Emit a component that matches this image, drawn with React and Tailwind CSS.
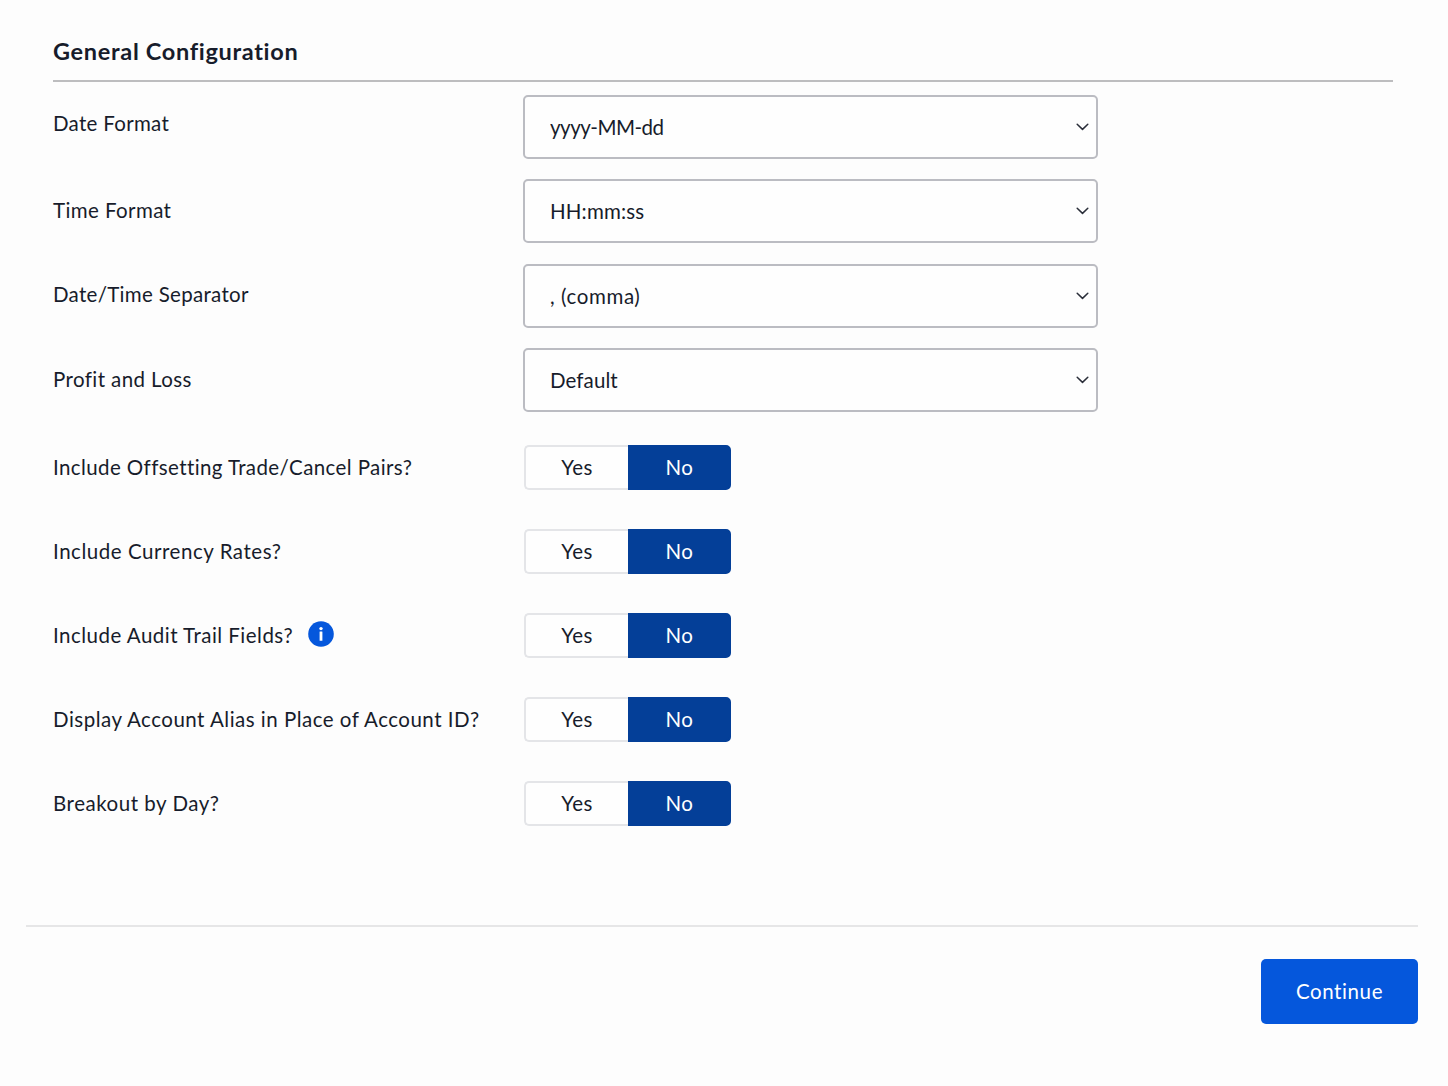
import React, { useState } from 'react';

const selectFields = [
    {
        label: 'Date Format',
        options: ['yyyy-MM-dd', 'MM/dd/yyyy', 'dd/MM/yyyy'],
        labelClass: 'pb-[7px] tracking-[0.3px]',
        selectClass: 'tracking-[-0.5px]',
    },
    {
        label: 'Time Format',
        options: ['HH:mm:ss', 'HHmmss'],
        labelClass: 'pb-[2px] tracking-[0.4px]',
        selectClass: 'tracking-[0.15px]',
    },
    {
        label: 'Date/Time Separator',
        options: [', (comma)', '; (semi-colon)', 'No Separator'],
        labelClass: 'pb-[3px] tracking-[0.3px]',
        selectClass: 'tracking-[0.6px]',
    },
    {
        label: 'Profit and Loss',
        options: ['Default', 'MTM Only', 'Realized Only'],
        labelClass: 'pb-[2px] tracking-[0.4px]',
        selectClass: 'tracking-[0.1px]',
    },
];

const toggleFields = [
    { label: 'Include Offsetting Trade/Cancel Pairs?', labelClass: 'tracking-[0.4px]' },
    { label: 'Include Currency Rates?', labelClass: 'tracking-[0.54px]' },
    { label: 'Include Audit Trail Fields?', labelClass: 'tracking-[0.48px]', info: true },
    { label: 'Display Account Alias in Place of Account ID?', labelClass: 'tracking-[0.49px]' },
    { label: 'Breakout by Day?', labelClass: 'tracking-[0.53px]' },
];

const ChevronIcon = () => (
    <svg className="pointer-events-none absolute right-[9.5px] top-[28px] h-2 w-[13px]" viewBox="0 0 13 8" fill="none">
        <path d="M1.2 1.3 6.5 6.4l5.3-5.1" stroke="#2a2e39" strokeWidth="1.5" strokeLinecap="round" strokeLinejoin="round" />
    </svg>
);

const InfoIcon = () => (
    <svg className="-mt-px ml-[15px] h-[26px] w-[26px]" viewBox="0 0 26 26">
        <circle cx="13" cy="13" r="12.8" fill="#0557dc" />
        <circle cx="13" cy="7.6" r="1.7" fill="#fff" />
        <rect x="11.6" y="10.4" width="2.8" height="9.4" rx="0.4" fill="#fff" />
    </svg>
);

const SelectRow = ({ label, options, labelClass, selectClass }) => (
    <div className="flex h-[84.5px] items-start">
        <div className={`flex h-16 w-[470px] items-center ${labelClass}`}>{label}</div>
        <div className="relative">
            <select
                aria-label={label}
                className={`h-16 w-[575px] appearance-none rounded-[5px] border-2 border-[#bbbcc2] bg-[#fefefe] pl-[25px] outline-none ${selectClass}`}
            >
                {options.map((option) => (
                    <option key={option}>{option}</option>
                ))}
            </select>
            <ChevronIcon />
        </div>
    </div>
);

const ToggleRow = ({ label, labelClass, info }) => {
    const [value, setValue] = useState('No');

    return (
        <div className="flex h-[84px] items-start">
            <div className={`flex h-[45px] w-[471px] items-center pb-[2px] ${labelClass}`}>
                {label}
                {info && <InfoIcon />}
            </div>
            <div className="flex h-[45px] w-[207px]">
                <button
                    onClick={() => setValue('Yes')}
                    className={`w-[104px] rounded-l-[5px] border-y-2 border-l-2 pb-[2px] ${value === 'Yes' ? 'border-[#043f98] bg-[#043f98] text-white' : 'border-[#e4e5e8] bg-[#fefefe]'}`}
                >
                    Yes
                </button>
                <button
                    onClick={() => setValue('No')}
                    className={`w-[103px] rounded-r-[5px] border-2 pb-[2px] ${value === 'No' ? 'border-[#043f98] bg-[#043f98] text-white' : 'border-[#e4e5e8] bg-[#fefefe]'}`}
                >
                    No
                </button>
            </div>
        </div>
    );
};

const App = () => (
    <main className="h-[1086px] bg-[#fdfdfd] px-[26px] pt-[35px] font-['Lato',sans-serif] text-[20.5px] leading-8 tracking-[0.4px] text-[#171c2b]">
        <section className="ml-[27px] mr-[29px]">
            <h1 className="h-[47px] border-b-2 border-[#bdbdbf] text-[23.5px] font-bold tracking-[0.68px]">General Configuration</h1>
            <div className="pt-[12.5px]">
                {selectFields.map((field) => (
                    <SelectRow key={field.label} {...field} />
                ))}
            </div>
            <div className="pt-[12.5px]">
                {toggleFields.map((field) => (
                    <ToggleRow key={field.label} {...field} />
                ))}
            </div>
        </section>
        <footer className="mr-1 mt-[60px] flex justify-end border-t-2 border-[#e6e6e7] pt-8">
            <button className="h-[65px] w-[157px] rounded-[5px] bg-[#0557dc] pb-px tracking-[0.6px] text-white">Continue</button>
        </footer>
    </main>
);

export default App;
